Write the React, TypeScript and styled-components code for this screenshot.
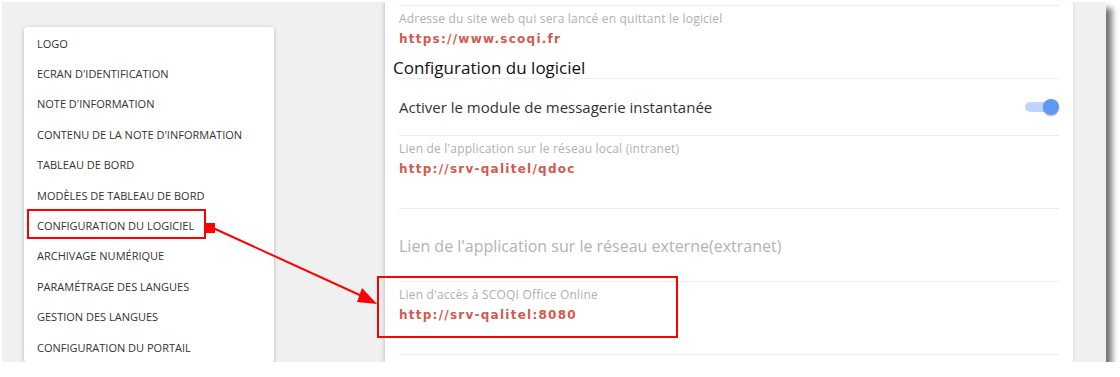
import React from "react";
import styled, { createGlobalStyle } from "styled-components";

const Global = createGlobalStyle`
  html, body { margin: 0; padding: 0; background: #ffffff; }
  body { font-family: "Open Sans", "Noto Sans", sans-serif; }
  * { box-sizing: border-box; }
`;

const Frame = styled.div`
  position: relative;
  margin: 2px 0 0 2px;
  width: 1104px;
  height: 360px;
  background: #f0f0f0;
  overflow: hidden;
  display: flex;
  align-items: flex-start;
  box-shadow: 6px 6px 6px rgba(0, 0, 0, 0.55);
`;

const MenuCard = styled.nav`
  margin: 25px 0 0 22px;
  width: 250px;
  padding-top: 1px;
  background: #fff;
  border-radius: 3px;
  box-shadow: 0 1px 4px rgba(0, 0, 0, 0.22);
  flex-shrink: 0;
`;

const MenuItem = styled.div`
  height: 30.4px;
  display: flex;
  align-items: center;
  padding-left: 13px;
  font-size: 11px;
  color: #333;
  text-transform: uppercase;
  white-space: nowrap;
`;

const SettingsCard = styled.section`
  margin-left: 111px;
  width: 688px;
  height: 360px;
  padding: 3px 14px 0;
  background: #fff;
  box-shadow: -1px 0 4px rgba(0, 0, 0, 0.18);
  flex-shrink: 0;
`;

const Field = styled.div<{ $h: number }>`
  height: ${(p) => p.$h}px;
  border-top: 1px solid #ececec;
  padding-top: 5px;
`;

const Label = styled.div`
  font-size: 12px;
  line-height: 16px;
  letter-spacing: 0.2px;
  color: #b0b0b0;
  white-space: nowrap;
`;

const Value = styled.div`
  margin-top: 4px;
  font-family: "DejaVu Sans", sans-serif;
  font-weight: bold;
  font-size: 12px;
  line-height: 16px;
  letter-spacing: 1.25px;
  color: #d05a50;
  white-space: nowrap;
`;

const SectionTitle = styled.h2`
  margin: 0 0 0 -6px;
  height: 26px;
  padding-top: 6px;
  font-size: 17px;
  line-height: 20px;
  font-weight: normal;
  color: #111;
  white-space: nowrap;
`;

const ToggleRow = styled.div`
  height: 57px;
  border-top: 1px solid #ececec;
  display: flex;
  align-items: center;
  justify-content: space-between;
  font-size: 15px;
  color: #333;
`;

const BigPlaceholder = styled.div`
  height: 73px;
  border-top: 1px solid #ececec;
  display: flex;
  align-items: center;
  padding-top: 2px;
  font-size: 16px;
  color: #b3b3b3;
  white-space: nowrap;
`;

const Switch = styled.div`
  position: relative;
  width: 34px;
  height: 16px;
  display: flex;
  align-items: center;
`;

const Track = styled.div`
  width: 30px;
  height: 10px;
  border-radius: 5px;
  background: #bfd5fb;
`;

const Thumb = styled.div`
  position: absolute;
  right: 0;
  top: 0;
  width: 16px;
  height: 16px;
  border-radius: 50%;
  background: #5f98f2;
  box-shadow: 0 1px 2px rgba(0, 0, 0, 0.3);
`;

const Overlay = styled.svg`
  position: absolute;
  left: 0;
  top: 0;
  pointer-events: none;
`;

const menu = [
  "Logo",
  "Ecran d'identification",
  "Note d'information",
  "Contenu de la note d'information",
  "Tableau de bord",
  "Modèles de tableau de bord",
  "Configuration du logiciel",
  "Archivage numérique",
  "Paramétrage des langues",
  "Gestion des langues",
  "Configuration du portail",
];

export default function App() {
  return (
    <>
      <Global />
      <Frame>
        <MenuCard>
          {menu.map((m) => (
            <MenuItem key={m}>{m}</MenuItem>
          ))}
        </MenuCard>
        <SettingsCard>
          <Field $h={47}>
            <Label>Adresse du site web qui sera lancé en quittant le logiciel</Label>
            <Value>https://www.scoqi.fr</Value>
          </Field>
          <SectionTitle>Configuration du logiciel</SectionTitle>
          <ToggleRow>
            <span>Activer le module de messagerie instantanée</span>
            <Switch>
              <Track />
              <Thumb />
            </Switch>
          </ToggleRow>
          <Field $h={73}>
            <Label>Lien de l'application sur le réseau local (intranet)</Label>
            <Value>http://srv-qalitel/qdoc</Value>
          </Field>
          <BigPlaceholder>Lien de l'application sur le réseau externe(extranet)</BigPlaceholder>
          <Field $h={73}>
            <Label>Lien d'accès à SCOQI Office Online</Label>
            <Value>http://srv-qalitel:8080</Value>
          </Field>
          <Field $h={20} />
        </SettingsCard>
        <Overlay width="1104" height="360" viewBox="0 0 1104 360">
          <rect x="26" y="208" width="177" height="28" fill="none" stroke="#ff0000" strokeWidth="2" />
          <rect x="203" y="221" width="10" height="10" fill="#ff0000" />
          <line x1="211" y1="226" x2="362" y2="295" stroke="#ff0000" strokeWidth="2" />
          <polygon points="355,300 360,286 375,302" fill="#ff0000" />
          <rect x="376" y="275" width="299" height="60" fill="none" stroke="#ff0000" strokeWidth="2" />
        </Overlay>
      </Frame>
    </>
  );
}
